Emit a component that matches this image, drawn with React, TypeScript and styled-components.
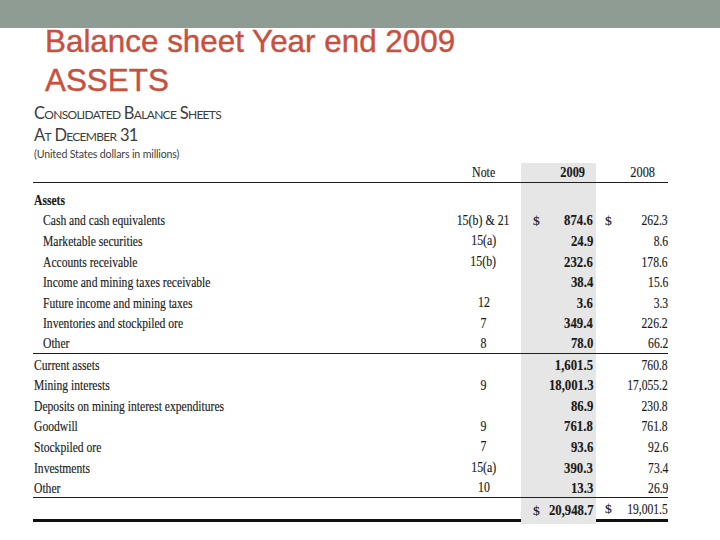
import React from "react";
import styled, { createGlobalStyle, css } from "styled-components";

type Rule = "none" | "thin" | "thick";

interface ILine {
  label: string;
  indent?: boolean;
  note?: string;
  cur?: string;
  prev?: string;
  dollar?: boolean;
  rule?: Rule;
}

const GlobalStyle = createGlobalStyle`
  body {
    margin: 0;
    background: #ffffff;
  }
`;

const Page = styled.div`
  width: 720px;
  height: 540px;
  overflow: hidden;
  background: #ffffff;
  display: flex;
  flex-direction: column;
`;

const TopBar = styled.div`
  height: 28px;
  flex-shrink: 0;
  background: #8e9c94;
`;

const Title = styled.h1`
  margin: 0;
  padding-left: 45px;
  display: flex;
  flex-direction: column;
  gap: 12px;
  font-family: "Liberation Sans", Arial, sans-serif;
  font-weight: 400;
  font-size: 31.4px;
  color: #c8503d;
  -webkit-text-stroke: 0.4px #c8503d;
`;

const TitleLine = styled.span`
  line-height: 27px;
  white-space: nowrap;
`;

const Report = styled.section`
  margin-top: 8px;
  padding-left: 33px;
  display: flex;
  flex-direction: column;
`;

const HeadLine = styled.div<{ $small?: boolean }>`
  padding-left: 1px;
  font-family: Lato, "Liberation Sans", sans-serif;
  color: #3d3d3d;
  white-space: nowrap;
  ${(p) =>
    p.$small
      ? css`
          font-size: 10.6px;
          line-height: 17px;
          letter-spacing: -0.15px;
        `
      : css`
          font-size: 16.5px;
          line-height: 22px;
          font-variant: small-caps;
          letter-spacing: -0.7px;
        `}
`;

const Table = styled.div`
  width: 635px;
  display: flex;
  flex-direction: column;
  font-family: "Liberation Serif", "Times New Roman", serif;
  color: #1a1a1a;
  -webkit-text-stroke: 0.15px #1a1a1a;
`;

const Row = styled.div<{ $h: number }>`
  display: grid;
  grid-template-columns: 413px 75px 75px 72px;
  height: ${(p) => p.$h}px;
`;

const Cell = styled.div<{ $rule?: Rule; $shade?: boolean }>`
  box-sizing: border-box;
  display: flex;
  align-items: center;
  padding-top: 2px;
  white-space: nowrap;
  background: ${(p) => (p.$shade ? "#e6e6e6" : "transparent")};
  border-bottom: ${(p) =>
    p.$rule === "thin"
      ? "1.5px solid #1f1f1f"
      : p.$rule === "thick"
      ? "3px solid #111111"
      : "none"};
`;

// the scanned statement is set in a narrow serif, so glyphs get squeezed
const Squeeze = styled.span<{ $x: number; $from: "left" | "right" | "center" }>`
  display: inline-block;
  transform: scaleX(${(p) => p.$x});
  transform-origin: ${(p) => p.$from} center;
`;

const LabelCell = styled(Cell)<{ $indent?: boolean; $bold?: boolean }>`
  padding-left: ${(p) => (p.$indent ? 10 : 1)}px;
  font-size: 14.5px;
  font-weight: ${(p) => (p.$bold ? 700 : 400)};
`;

const NoteCell = styled(Cell)`
  justify-content: center;
  font-size: 14px;
`;

const HeadCell = styled(Cell)<{ $bold?: boolean; $pad: number }>`
  justify-content: flex-end;
  padding-top: 0;
  padding-right: ${(p) => p.$pad}px;
  font-size: 14.5px;
  font-weight: ${(p) => (p.$bold ? 700 : 400)};
`;

const AmountCell = styled(Cell)<{ $bold?: boolean; $padL: number; $padR: number }>`
  justify-content: space-between;
  padding-left: ${(p) => p.$padL}px;
  padding-right: ${(p) => p.$padR}px;
  font-size: ${(p) => (p.$bold ? 15 : 14.5)}px;
  font-weight: ${(p) => (p.$bold ? 700 : 400)};
`;

const Dollar = styled.span`
  font-weight: 400;
  font-size: 13.5px;
`;

const current: ILine[] = [
  { label: "Cash and cash equivalents", indent: true, note: "15(b) & 21", cur: "874.6", prev: "262.3", dollar: true },
  { label: "Marketable securities", indent: true, note: "15(a)", cur: "24.9", prev: "8.6" },
  { label: "Accounts receivable", indent: true, note: "15(b)", cur: "232.6", prev: "178.6" },
  { label: "Income and mining taxes receivable", indent: true, cur: "38.4", prev: "15.6" },
  { label: "Future income and mining taxes", indent: true, note: "12", cur: "3.6", prev: "3.3" },
  { label: "Inventories and stockpiled ore", indent: true, note: "7", cur: "349.4", prev: "226.2" },
  { label: "Other", indent: true, note: "8", cur: "78.0", prev: "66.2", rule: "thin" },
  { label: "Current assets", cur: "1,601.5", prev: "760.8" },
  { label: "Mining interests", note: "9", cur: "18,001.3", prev: "17,055.2" },
  { label: "Deposits on mining interest expenditures", cur: "86.9", prev: "230.8" },
  { label: "Goodwill", note: "9", cur: "761.8", prev: "761.8" },
  { label: "Stockpiled ore", note: "7", cur: "93.6", prev: "92.6" },
  { label: "Investments", note: "15(a)", cur: "390.3", prev: "73.4" },
  { label: "Other", note: "10", cur: "13.3", prev: "26.9", rule: "thin" },
  { label: "", cur: "20,948.7", prev: "19,001.5", dollar: true, rule: "thick" },
];

const LineRow = ({ line }: { line: ILine }) => {
  const rule = line.rule || "none";
  const last = rule === "thick";
  return (
    <Row $h={last ? 24 : 20.6}>
      <LabelCell $rule={rule} $indent={line.indent}>
        <Squeeze $x={0.8} $from="left">
          {line.label}
        </Squeeze>
      </LabelCell>
      <NoteCell $rule={rule}>
        <Squeeze $x={0.85} $from="center">
          {line.note}
        </Squeeze>
      </NoteCell>
      <AmountCell $rule={last ? "none" : rule} $shade $bold $padL={12} $padR={3}>
        <Dollar>{line.dollar ? "$" : ""}</Dollar>
        <Squeeze $x={0.85} $from="right">
          {line.cur}
        </Squeeze>
      </AmountCell>
      <AmountCell $rule={rule} $padL={9} $padR={0}>
        <Dollar>{line.dollar ? "$" : ""}</Dollar>
        <Squeeze $x={0.8} $from="right">
          {line.prev}
        </Squeeze>
      </AmountCell>
    </Row>
  );
};

const App = () => {
  return (
    <Page>
      <GlobalStyle />
      <TopBar />
      <Title>
        <TitleLine>Balance sheet Year end 2009</TitleLine>
        <TitleLine>ASSETS</TitleLine>
      </Title>
      <Report>
        <HeadLine>Consolidated Balance Sheets</HeadLine>
        <HeadLine>At December 31</HeadLine>
        <HeadLine $small>(United States dollars in millions)</HeadLine>
        <Table>
          <Row $h={19.5}>
            <LabelCell $rule="thin" />
            <NoteCell $rule="thin">
              <Squeeze $x={0.85} $from="center">
                Note
              </Squeeze>
            </NoteCell>
            <HeadCell $rule="thin" $shade $bold $pad={11}>
              <Squeeze $x={0.85} $from="right">
                2009
              </Squeeze>
            </HeadCell>
            <HeadCell $rule="thin" $pad={13}>
              <Squeeze $x={0.85} $from="right">
                2008
              </Squeeze>
            </HeadCell>
          </Row>
          <Row $h={6.5}>
            <Cell />
            <Cell />
            <Cell $shade />
            <Cell />
          </Row>
          <Row $h={20.6}>
            <LabelCell $bold>
              <Squeeze $x={0.8} $from="left">
                Assets
              </Squeeze>
            </LabelCell>
            <Cell />
            <Cell $shade />
            <Cell />
          </Row>
          {current.map((line, i) => (
            <LineRow key={i} line={line} />
          ))}
          <Row $h={2}>
            <Cell />
            <Cell />
            <Cell $shade />
            <Cell />
          </Row>
        </Table>
      </Report>
    </Page>
  );
};

export default App;
